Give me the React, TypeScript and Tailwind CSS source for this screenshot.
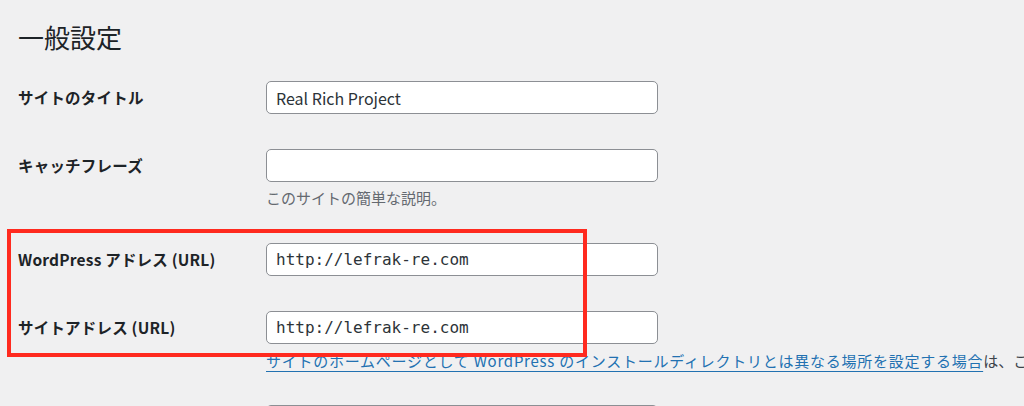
const jp = { fontFamily: '"Noto Sans CJK JP", "Noto Sans", sans-serif' };
const mono = { fontFamily: '"DejaVu Sans Mono", "Liberation Mono", monospace' };

function Row({ label, value, monoValue, className }: { label: string; value?: string; monoValue?: boolean; className?: string }) {
  return (
    <div className={"grid grid-cols-[248px_392px] " + (className ?? "")}>
      <div className="h-[33px] flex items-center text-[15.5px] font-bold text-[#1d2327] tracking-[0.2px]">{label}</div>
      <div
        className="h-[33px] bg-white border border-[#8c8f94] rounded-[5px] flex items-center pl-[9px] text-[16px] text-[#2c3338]"
        style={monoValue ? mono : jp}
      >
        {value}
      </div>
    </div>
  );
}

export default function App() {
  return (
    <div className="relative w-[1024px] h-[406px] overflow-hidden bg-[#f0f0f1] pl-[18px] pt-[20px]" style={jp}>
      <h1 className="text-[26px] leading-[34px] font-normal text-[#1d2327]">一般設定</h1>

      <Row className="mt-[27px]" label="サイトのタイトル" value="Real Rich Project" />

      <Row className="mt-[35px]" label="キャッチフレーズ" />
      <p className="ml-[248px] mt-[5px] text-[15px] leading-[22px] text-[#646970]">このサイトの簡単な説明。</p>

      <Row className="mt-[34px]" label="WordPress アドレス (URL)" value="http://lefrak-re.com" monoValue />
      <Row className="mt-[35px]" label="サイトアドレス (URL)" value="http://lefrak-re.com" monoValue />
      <p className="ml-[248px] mt-[6px] text-[15px] leading-[22px] whitespace-nowrap text-[#3c434a]">
        <a href="#" className="text-[#2271b1] underline underline-offset-[4px] tracking-[0.75px]">
          サイトのホームページとして WordPress のインストールディレクトリとは異なる場所を設定する場合
        </a>
        は、このフィールドに入力してください。
      </p>

      <div className="ml-[248px] mt-[33px] w-[392px] h-[33px] bg-white border border-[#8c8f94] rounded-[5px]" />

      <div className="absolute left-[7px] top-[229px] w-[580px] h-[128px] border-[4px] border-[#ff2a1f]" />
    </div>
  );
}
